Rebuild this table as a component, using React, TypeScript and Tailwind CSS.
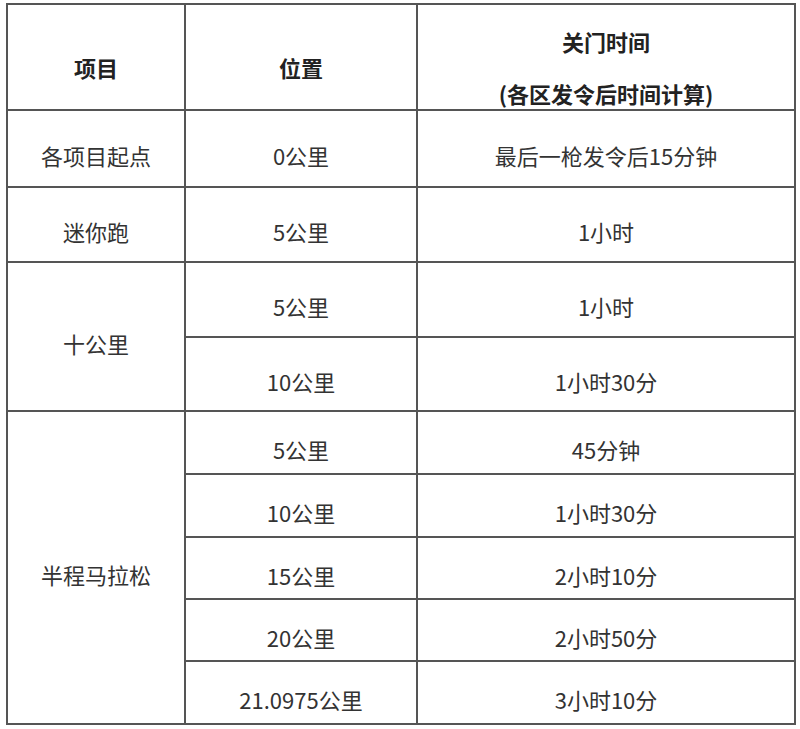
import React from "react";

const font = { fontFamily: '"Noto Sans CJK SC", "Noto Sans", sans-serif' };

export default function App() {
  const td = "border-2 border-[#555] text-center align-middle text-[22px] text-[#333] pt-[14px]";
  const rows: { h: string; cells: React.ReactNode }[] = [];
  return (
    <div className="w-[800px] h-[729px] bg-white overflow-hidden pt-[3px] pl-[6px]" style={font}>
      <table className="border-collapse w-[788px] table-fixed">
        <colgroup>
          <col className="w-[178px]" />
          <col className="w-[232px]" />
          <col className="w-[378px]" />
        </colgroup>
        <tbody>
          <tr className="h-[106px]">
            <td className="border-2 border-[#555] text-center align-middle text-[22px] font-bold text-[#222] pt-[20px]">项目</td>
            <td className="border-2 border-[#555] text-center align-middle text-[22px] font-bold text-[#222] pt-[20px]">位置</td>
            <td className="border-2 border-[#555] text-center align-middle text-[22px] font-bold text-[#222] pt-[20px]">
              <div className="leading-[26px]">关门时间</div>
              <div className="leading-[26px] mt-[26px]">(各区发令后时间计算)</div>
            </td>
          </tr>
          <tr className="h-[77px]">
            <td className={td}>各项目起点</td>
            <td className={td}>0公里</td>
            <td className={td}>最后一枪发令后15分钟</td>
          </tr>
          <tr className="h-[75px]">
            <td className={td}>迷你跑</td>
            <td className={td}>5公里</td>
            <td className={td}>1小时</td>
          </tr>
          <tr className="h-[75px]">
            <td className={td} rowSpan={2}>十公里</td>
            <td className={td}>5公里</td>
            <td className={td}>1小时</td>
          </tr>
          <tr className="h-[74px]">
            <td className={td}>10公里</td>
            <td className={td}>1小时30分</td>
          </tr>
          <tr className="h-[63px]">
            <td className={td} rowSpan={5}>半程马拉松</td>
            <td className={td}>5公里</td>
            <td className={td}>45分钟</td>
          </tr>
          <tr className="h-[63px]">
            <td className={td}>10公里</td>
            <td className={td}>1小时30分</td>
          </tr>
          <tr className="h-[62px]">
            <td className={td}>15公里</td>
            <td className={td}>2小时10分</td>
          </tr>
          <tr className="h-[62px]">
            <td className={td}>20公里</td>
            <td className={td}>2小时50分</td>
          </tr>
          <tr className="h-[63px]">
            <td className={td}>21.0975公里</td>
            <td className={td}>3小时10分</td>
          </tr>
        </tbody>
      </table>
      {rows.length > 0 ? null : null}
    </div>
  );
}
